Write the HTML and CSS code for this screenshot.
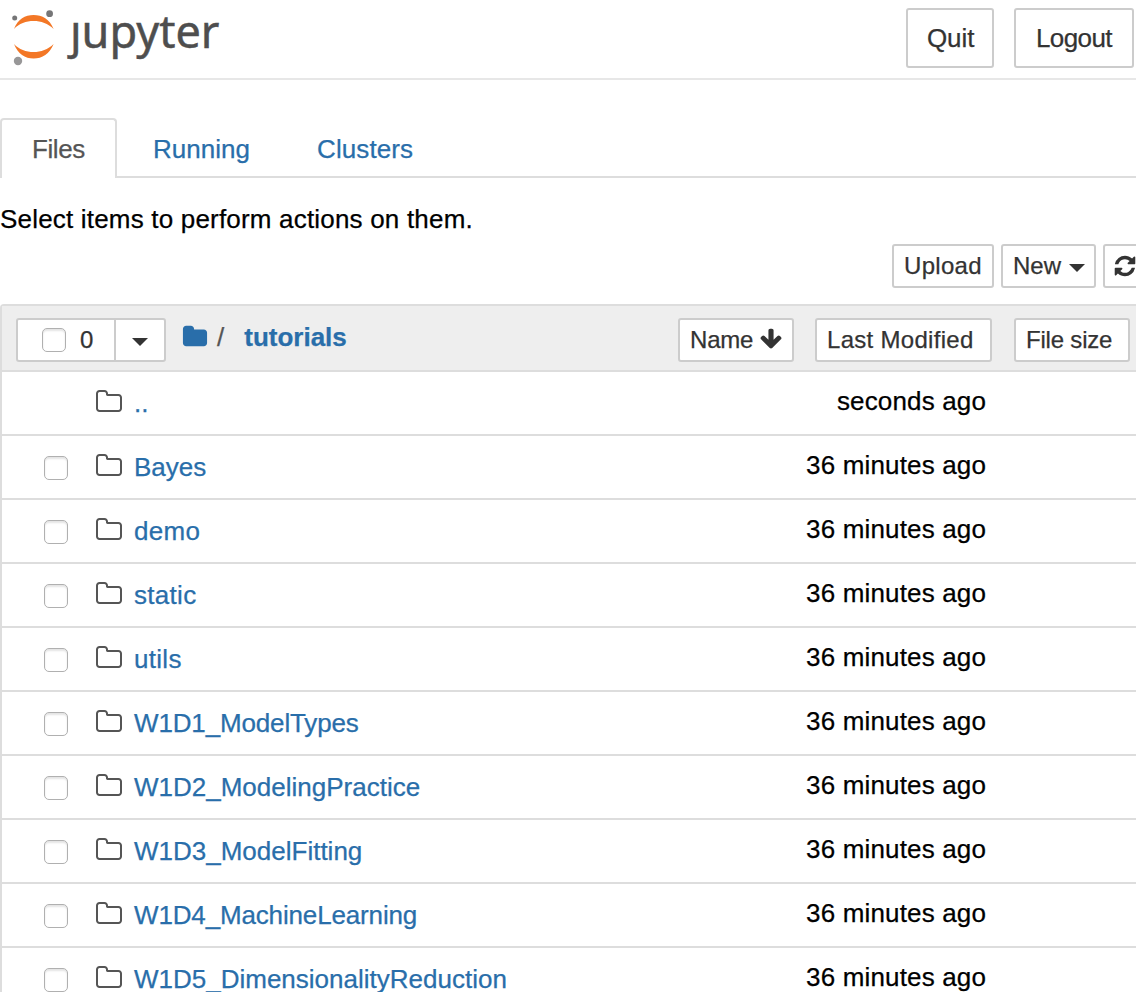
FILE: index.html
```
<!DOCTYPE html>
<html lang="en">
<head>
<meta charset="utf-8">
<title>Jupyter</title>
<link rel="stylesheet" href="styles.css">
</head>
<body>
<svg class="defs" aria-hidden="true">
  <symbol id="folder-o" viewBox="0 0 1792 1792"><path d="M1600 1312v-704q0-40-28-68t-68-28h-704q-40 0-68-28t-28-68v-64q0-40-28-68t-68-28h-320q-40 0-68 28t-28 68v960q0 40 28 68t68 28h1216q40 0 68-28t28-68zm128-704v704q0 92-66 158t-158 66h-1216q-92 0-158-66t-66-158v-960q0-92 66-158t158-66h320q92 0 158 66t66 158v32h672q92 0 158 66t66 158z"/></symbol>
</svg>
<header class="header">
  <a class="logo">
    <svg class="planet" width="46" height="60" viewBox="0 0 46 60">
      <path fill="#f37726" d="M4 23C8 13 15 9 23.600 9S39.500 13 43.600 23C38 17.500 31 15 23.600 15S9 17.500 4 23Z"/>
      <path fill="#f37726" d="M4 38C8 48 15 52.500 23.600 52.500S39.500 48 43.600 38C38 43.500 31 46 23.600 46S9 43.500 4 38Z"/>
      <circle cx="39.600" cy="7.700" r="3.400" fill="#767677"/>
      <circle cx="4.700" cy="12" r="2.500" fill="#767677"/>
      <circle cx="8" cy="55" r="4.200" fill="#989798"/>
    </svg>
    <span class="wordmark">ȷupyter</span>
  </a>
  <div class="session">
    <button class="btn btn-lg quit">Quit</button>
    <button class="btn btn-lg logout">Logout</button>
  </div>
</header>
<nav class="tabs">
  <a class="tab active">Files</a>
  <a class="tab running">Running</a>
  <a class="tab clusters">Clusters</a>
</nav>
<p class="hint">Select items to perform actions on them.</p>
<div class="actions">
  <button class="btn upload">Upload</button>
  <button class="btn new">New<span class="caret"></span></button>
  <button class="btn refresh"><svg width="24" height="24" viewBox="0 0 1792 1792"><path d="M1639 1056q0 5-1 7-64 268-268 434.500t-478 166.500q-146 0-282.500-55t-243.500-157l-129 129q-19 19-45 19t-45-19-19-45v-448q0-26 19-45t45-19h448q26 0 45 19t19 45-19 45l-137 137q71 66 161 102t187 36q134 0 250-65t186-179q11-17 53-117 8-23 30-23h192q13 0 22.500 9.500t9.500 22.500zm25-800v448q0 26-19 45t-45 19h-448q-26 0-45-19t-19-45 19-45l138-138q-148-137-349-137-134 0-250 65t-186 179q-11 17-53 117-8 23-30 23h-199q-13 0-22.500-9.500t-9.500-22.500v-7q65-268 270-434.500t480-166.500q146 0 284 55.500t245 156.500l130-129q19-19 45-19t45 19 19 45z"/></svg></button>
</div>
<main class="list">
  <div class="list-header">
    <div class="select">
      <button class="btn select-all"><span class="check"></span><span>0</span></button>
      <button class="btn select-menu"><span class="caret"></span></button>
    </div>
    <div class="crumbs">
      <svg width="26" height="26" viewBox="0 0 1792 1792"><path d="M1728 608v704q0 92-66 158t-158 66h-1216q-92 0-158-66t-66-158v-960q0-92 66-158t158-66h320q92 0 158 66t66 158v32h672q92 0 158 66t66 158z"/></svg>
      <span class="slash">/</span>
      <a class="crumb">tutorials</a>
    </div>
    <div class="sorts">
      <button class="btn name-sort">Name<svg width="24" height="24" viewBox="0 0 1792 1792"><path d="M1675 832q0 53-37 90l-651 652q-39 37-91 37-53 0-90-37l-651-652q-38-36-38-90 0-53 38-91l74-75q39-37 91-37 53 0 90 37l294 294v-704q0-52 38-90t90-38h128q52 0 90 38t38 90v704l294-294q37-37 90-37 52 0 91 37l75 75q37 39 37 91z"/></svg></button>
      <button class="btn modified-sort">Last Modified</button>
      <button class="btn size-sort">File size</button>
    </div>
  </div>
  <div class="row"><span class="check hidden"></span><svg class="folder"><use href="#folder-o"/></svg><a class="name">..</a><span class="time">seconds ago</span></div>
  <div class="row"><span class="check"></span><svg class="folder"><use href="#folder-o"/></svg><a class="name">Bayes</a><span class="time">36 minutes ago</span></div>
  <div class="row"><span class="check"></span><svg class="folder"><use href="#folder-o"/></svg><a class="name loose">demo</a><span class="time">36 minutes ago</span></div>
  <div class="row"><span class="check"></span><svg class="folder"><use href="#folder-o"/></svg><a class="name loose">static</a><span class="time">36 minutes ago</span></div>
  <div class="row"><span class="check"></span><svg class="folder"><use href="#folder-o"/></svg><a class="name loose">utils</a><span class="time">36 minutes ago</span></div>
  <div class="row"><span class="check"></span><svg class="folder"><use href="#folder-o"/></svg><a class="name tight">W1D1_ModelTypes</a><span class="time">36 minutes ago</span></div>
  <div class="row"><span class="check"></span><svg class="folder"><use href="#folder-o"/></svg><a class="name">W1D2_ModelingPractice</a><span class="time">36 minutes ago</span></div>
  <div class="row"><span class="check"></span><svg class="folder"><use href="#folder-o"/></svg><a class="name">W1D3_ModelFitting</a><span class="time">36 minutes ago</span></div>
  <div class="row"><span class="check"></span><svg class="folder"><use href="#folder-o"/></svg><a class="name tight">W1D4_MachineLearning</a><span class="time">36 minutes ago</span></div>
  <div class="row"><span class="check"></span><svg class="folder"><use href="#folder-o"/></svg><a class="name">W1D5_DimensionalityReduction</a><span class="time">36 minutes ago</span></div>
</main>
</body>
</html>
```
FILE: styles.css
```
* { box-sizing: border-box; }
html, body { height: 992px; overflow: hidden; }
body {
  margin: 0;
  background: #fff;
  color: #000;
  font: 26px/36px "Liberation Sans", Arial, sans-serif;
  -webkit-text-stroke: .25px;
}
.defs { display: none; }
.header {
  display: flex;
  justify-content: space-between;
  height: 80px;
  padding: 8px 2px 0 10px;
  border-bottom: 2px solid #e7e7e7;
}
.logo { display: flex; }
.planet { display: block; margin-top: -2px; }
.wordmark {
  margin: -3px 0 0 14px;
  font: 45px/52px "Noto Sans", sans-serif;
  color: #4e4e4e;
  -webkit-text-stroke: .5px;
}
.session { display: flex; gap: 20px; }
.btn {
  display: flex;
  align-items: center;
  flex: none;
  height: 44px;
  margin: 0;
  padding: 0 0 0 10px;
  border: 2px solid #ccc;
  border-radius: 3px;
  background: #fff;
  color: #333;
  fill: #333;
  font: 24px/36px "Liberation Sans", Arial, sans-serif;
  letter-spacing: .3px;
  white-space: nowrap;
}
.btn-lg { height: 60px; padding-left: 20px; font-size: 26px; letter-spacing: -.1px; }
.quit { width: 88px; padding-left: 19px; }
.logout { width: 120px; letter-spacing: -.6px; }
.tabs {
  display: flex;
  height: 60px;
  margin-top: 38px;
  border-bottom: 2px solid #ddd;
}
.tab { padding-top: 13px; color: #296eaa; }
.active {
  width: 117px;
  height: 60px;
  padding: 11px 0 0 30px;
  border: 2px solid #ddd;
  border-bottom: 0;
  border-radius: 4px 4px 0 0;
  background: #fff;
  color: #555;
  letter-spacing: -.4px;
}
.running { width: 164px; padding-left: 36px; }
.clusters { padding-left: 36px; letter-spacing: .1px; }
.hint { margin: 23px 0 0; letter-spacing: .19px; }
.actions {
  display: flex;
  gap: 7px;
  margin: 7px 0 16px 892px;
}
.upload { width: 102px; }
.new { width: 95px; letter-spacing: 0; }
.refresh { width: 48px; padding-left: 8px; }
.refresh svg { flex: none; margin-bottom: 1px; }
.caret {
  border: 8px solid transparent;
  border-top-color: #333;
  border-bottom: 0;
}
.new .caret { margin: 4px 0 0 8px; }
.list {
  border: 2px solid #ddd;
  border-right: 0;
  border-radius: 4px 0 0 0;
}
.list-header {
  display: flex;
  height: 66px;
  padding-top: 12px;
  border-bottom: 2px solid #ddd;
  background: #eee;
}
.select { display: flex; margin-left: 14px; }
.select-all { width: 100px; padding: 0 0 0 24px; gap: 14px; border-radius: 3px 0 0 3px; }
.select-menu { width: 52px; margin-left: -2px; padding: 4px 0 0 16px; border-radius: 0 3px 3px 0; }
.check {
  flex: none;
  width: 24px;
  height: 24px;
  border: 1.500px solid #b0b0b0;
  border-radius: 5px;
  background: #fff;
  box-shadow: inset 0 2px 2px #e4e4e4;
}
.crumbs { display: flex; width: 496px; margin-left: 16px; fill: #296eaa; }
.crumbs svg { margin-top: 6px; }
.slash { margin: 1px 0 0 9px; color: #555; }
.crumb { margin: 1px 0 0 20px; color: #296eaa; font-weight: bold; }
.sorts { display: flex; }
.name-sort { width: 116px; letter-spacing: -.2px; }
.name-sort svg { margin: 0 0 2px 6px; }
.modified-sort { width: 177px; margin-left: 21px; }
.size-sort { width: 116px; margin-left: 22px; letter-spacing: -.2px; }
.row {
  display: flex;
  height: 64px;
  border-bottom: 2px solid #ddd;
}
.row .check { margin: 20px 0 0 42px; }
.hidden { visibility: hidden; }
.folder { flex: none; width: 28px; height: 28px; margin: 16px 0 0 27px; fill: #555; }
.name { margin: 13px 0 0 11px; color: #296eaa; }
.loose { letter-spacing: .3px; }
.tight { letter-spacing: -.15px; }
.time { margin: 11px 150px 0 auto; letter-spacing: .15px; }
```
